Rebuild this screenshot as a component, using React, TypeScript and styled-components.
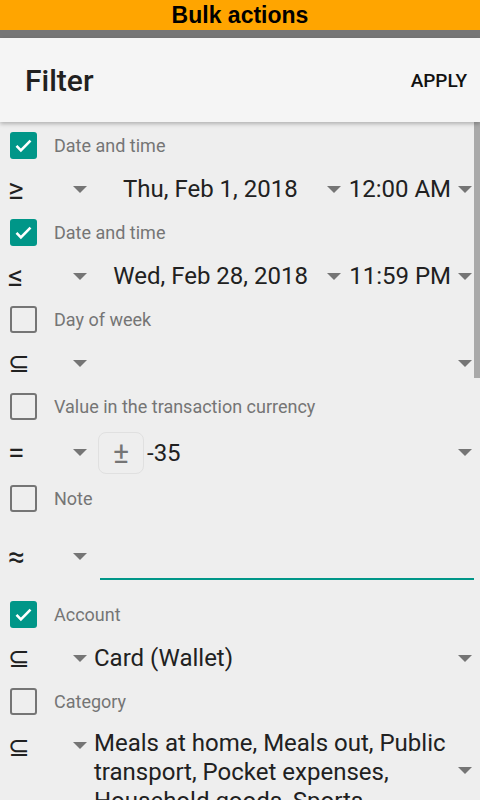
import React from "react";
import styled, { createGlobalStyle } from "styled-components";

const GlobalStyle = createGlobalStyle`
  html, body {
    margin: 0;
    padding: 0;
    width: 480px;
    height: 800px;
    overflow: hidden;
    background: #eeeeee;
    font-family: Roboto, "Noto Sans", sans-serif;
  }
`;

const Screen = styled.div`
  width: 480px;
  height: 800px;
  display: flex;
  flex-direction: column;
  overflow: hidden;
  background: #eeeeee;
  & > * {
    flex-shrink: 0;
  }
`;

const TitleBar = styled.div`
  height: 30px;
  background: #ffa500;
  display: flex;
  align-items: center;
  justify-content: center;
  font-family: "Liberation Sans", Arial, sans-serif;
  font-weight: bold;
  font-size: 23px;
  color: #000;
`;

const StatusBand = styled.div`
  height: 8px;
  background: #767676;
`;

const Toolbar = styled.div`
  height: 84px;
  background: #f5f5f5;
  display: flex;
  align-items: center;
  justify-content: space-between;
  padding: 0 13px 0 25px;
  box-shadow: 0 2px 4px rgba(0, 0, 0, 0.25);
  position: relative;
  z-index: 2;
`;

const ToolbarTitle = styled.div`
  font-size: 30px;
  font-weight: 500;
  color: #212121;
`;

const ApplyButton = styled.button`
  border: none;
  background: none;
  padding: 0;
  font-family: Roboto, sans-serif;
  font-size: 19px;
  font-weight: 500;
  color: #111;
`;

const Body = styled.div`
  position: relative;
  display: flex;
  flex-direction: column;
  & > * {
    flex-shrink: 0;
  }
`;

const ScrollThumb = styled.div`
  position: absolute;
  right: 0;
  top: 0;
  width: 6px;
  height: 256px;
  background: #a9a9a9;
`;

const CheckRow = styled.div`
  height: 47px;
  display: flex;
  align-items: center;
  padding-left: 10px;
  gap: 17px;
`;

const Box = styled.div<{ $checked: boolean }>`
  width: 27px;
  height: 27px;
  box-sizing: border-box;
  border-radius: 3px;
  background: ${(p) => (p.$checked ? "#009688" : "transparent")};
  border: ${(p) => (p.$checked ? "none" : "2.5px solid #757575")};
  display: flex;
  align-items: center;
  justify-content: center;
`;

const Label = styled.div`
  font-size: 18px;
  color: #757575;
`;

const ValueRow = styled.div<{ $h: number; $align?: string }>`
  height: ${(p) => p.$h}px;
  display: flex;
  align-items: ${(p) => p.$align || "center"};
  padding: 0 8px;
`;

const OpSymbol = styled.div<{ $top?: number; $size?: number }>`
  width: 32px;
  font-size: ${(p) => p.$size || 30}px;
  line-height: 1;
  color: #212121;
  padding-top: ${(p) => p.$top || 0}px;
`;

const OpArrowBox = styled.div<{ $top?: number }>`
  width: 48px;
  display: flex;
  justify-content: flex-end;
  padding-right: 1px;
  padding-top: ${(p) => p.$top || 0}px;
  box-sizing: border-box;
  margin-right: 6px;
`;

const Arrow = styled.div`
  width: 0;
  height: 0;
  border-left: 7px solid transparent;
  border-right: 7px solid transparent;
  border-top: 7px solid #757575;
  flex-shrink: 0;
`;

const Spinner = styled.div<{ $grow?: boolean }>`
  display: flex;
  align-items: center;
  flex: ${(p) => (p.$grow ? 1 : "none")};
  min-width: 0;
`;

const SpinnerText = styled.div<{ $center?: boolean }>`
  flex: 1;
  font-size: 24px;
  color: #212121;
  text-align: ${(p) => (p.$center ? "center" : "left")};
  white-space: nowrap;
`;

const TimeText = styled.div`
  font-size: 24px;
  color: #212121;
  margin: 0 7px 0 8px;
  white-space: nowrap;
`;

const SignButton = styled.div`
  width: 46px;
  height: 42px;
  box-sizing: border-box;
  margin-left: 4px;
  border: 1.5px solid #e0e0e0;
  border-radius: 8px;
  display: flex;
  align-items: center;
  justify-content: center;
  font-size: 30px;
  color: #757575;
`;

const Amount = styled.div`
  flex: 1;
  margin-left: 3px;
  font-size: 24px;
  color: #212121;
`;

const NoteInput = styled.div`
  flex: 1;
  height: 46px;
  margin-left: 6px;
  margin-right: -2px;
  border-bottom: 2.5px solid #009688;
  box-sizing: border-box;
`;

const MultiText = styled.div`
  flex: 1;
  font-size: 24px;
  line-height: 29px;
  color: #212121;
  padding-right: 4px;
  padding-top: 4px;
`;

function Check({ checked, label }: { checked: boolean; label: string }) {
  return (
    <CheckRow>
      <Box $checked={checked}>
        {checked && (
          <svg width="21" height="21" viewBox="0 0 24 24">
            <path d="M4 12.5l5 5L20 6.5" fill="none" stroke="#fff" strokeWidth="3" />
          </svg>
        )}
      </Box>
      <Label>{label}</Label>
    </CheckRow>
  );
}

function Op({ sym, size }: { sym: string; size?: number }) {
  return (
    <>
      <OpSymbol $size={size}>{sym}</OpSymbol>
      <OpArrowBox>
        <Arrow />
      </OpArrowBox>
    </>
  );
}

function DateRow({ sym, date, time }: { sym: string; date: string; time: string }) {
  return (
    <ValueRow $h={40}>
      <Op sym={sym} />
      <Spinner $grow>
        <SpinnerText $center>{date}</SpinnerText>
        <Arrow />
      </Spinner>
      <Spinner>
        <TimeText>{time}</TimeText>
        <Arrow />
      </Spinner>
    </ValueRow>
  );
}

export default function App() {
  return (
    <Screen>
      <GlobalStyle />
      <TitleBar>Bulk actions</TitleBar>
      <StatusBand />
      <Toolbar>
        <ToolbarTitle>Filter</ToolbarTitle>
        <ApplyButton>APPLY</ApplyButton>
      </Toolbar>
      <Body>
        <ScrollThumb />
        <Check checked label="Date and time" />
        <DateRow sym="≥" date="Thu, Feb 1, 2018" time="12:00 AM" />
        <Check checked label="Date and time" />
        <DateRow sym="≤" date="Wed, Feb 28, 2018" time="11:59 PM" />
        <Check checked={false} label="Day of week" />
        <ValueRow $h={40}>
          <Op sym="⊆" size={26} />
          <Spinner $grow>
            <SpinnerText />
            <Arrow />
          </Spinner>
        </ValueRow>
        <Check checked={false} label="Value in the transaction currency" />
        <ValueRow $h={45}>
          <Op sym="=" />
          <Spinner $grow>
            <SignButton>±</SignButton>
            <Amount>-35</Amount>
            <Arrow />
          </Spinner>
        </ValueRow>
        <Check checked={false} label="Note" />
        <ValueRow $h={69}>
          <Op sym="≈" size={30} />
          <NoteInput />
        </ValueRow>
        <Check checked label="Account" />
        <ValueRow $h={40}>
          <Op sym="⊆" size={26} />
          <Spinner $grow>
            <SpinnerText>Card (Wallet)</SpinnerText>
            <Arrow />
          </Spinner>
        </ValueRow>
        <Check checked={false} label="Category" />
        <ValueRow $h={100} $align="flex-start">
          <OpSymbol $top={9} $size={26}>⊆</OpSymbol>
          <OpArrowBox $top={17}>
            <Arrow />
          </OpArrowBox>
          <Spinner $grow>
            <MultiText>
              Meals at home, Meals out, Public transport, Pocket expenses, Household goods, Sports
            </MultiText>
            <Arrow />
          </Spinner>
        </ValueRow>
      </Body>
    </Screen>
  );
}
